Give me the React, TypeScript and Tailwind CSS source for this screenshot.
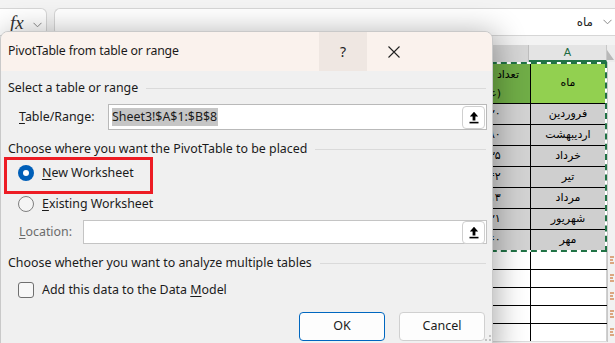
import React from "react";

const months = ["فروردین", "اردیبهشت", "خرداد", "تیر", "مرداد", "شهریور", "مهر"];
const counts = ["۱۲۰", "۹۸۰", "۷۳۵", "۶۴۲", "۸۱۳", "۵۲۱", "۴۶۰"];

function Chevron({ className = "" }: { className?: string }) {
  return (
    <svg width="9" height="6" viewBox="0 0 9 6" className={className}>
      <path d="M0.5 0.8 L4.5 4.8 L8.5 0.8" fill="none" stroke="#8a8a8a" strokeWidth="1" />
    </svg>
  );
}

function RefEditButton() {
  return (
    <div className="w-[23px] h-[23px] rounded-[4px] border border-[#cfcfcf] bg-white flex items-center justify-center shrink-0">
      <svg width="10" height="13" viewBox="0 0 10 13">
        <path d="M5 0.8 L9.2 5.4 H6.4 V9.4 H3.6 V5.4 H0.8 Z" fill="#000" />
        <rect x="0.5" y="10.8" width="9" height="1.6" fill="#000" />
      </svg>
    </div>
  );
}

function GroupTitle({ text }: { text: string }) {
  return (
    <div className="flex items-center gap-[8px] h-[16px] pr-[6px]">
      <span className="text-[12.4px] text-[#1b1b1b] whitespace-nowrap">{text}</span>
      <div className="flex-1 h-px bg-[#dadada]" />
    </div>
  );
}

function Sheet() {
  return (
    <div className="flex flex-col">
      {/* column headers */}
      <div className="flex h-[17px] mt-[9px]">
        <div className="flex-1 bg-[#d6d6d6] border-r border-[#bdbdbd]" />
        <div className="w-[78px] bg-[#e4e4e4] border-r border-[#c8c8c8] flex items-center justify-center text-[11px] text-[#1e6b41] font-['Liberation_Sans',sans-serif] border-b-2 border-b-[#217346]">
          A
        </div>
        <div className="w-[8px] bg-[#ececec] flex items-end justify-end">
          <svg width="8" height="14" viewBox="0 0 8 14">
            <path d="M0 2 L7 12 L0 12 Z" fill="#b8b8b8" />
          </svg>
        </div>
      </div>

      <div className="flex">
        <div className="flex-1 flex flex-col font-['DejaVu_Sans',sans-serif]">
          {/* copied range with marching ants */}
          <div className="border-2 border-dashed border-[#217346] bg-white flex flex-col" dir="rtl">
            <div className="flex h-[39px]">
              <div className="w-[75px] bg-[#92d050] border-l border-black flex items-center justify-center text-[11px] text-black">ماه</div>
              <div className="w-[57px] bg-[#70ad47] flex flex-col items-start justify-center text-[11px] leading-[19px] text-black whitespace-nowrap">
                <span className="pr-[11px]">تعداد فروش</span>
                <span className="pr-[29px]">(عدد)</span>
              </div>
              <div className="flex-1 bg-[#70ad47]" />
            </div>
            {months.map((m, i) => (
              <div key={m} className="flex h-[21px] border-t border-black">
                <div className="w-[75px] bg-[#cfcfcf] border-l border-black flex items-center justify-center text-[11px] text-black">{m}</div>
                <div className="w-[57px] bg-[#d2d2d2] flex items-center justify-start pl-[10px] text-[11px] text-black" dir="ltr">
                  {counts[i]}
                </div>
                <div className="flex-1 bg-[#d2d2d2]" />
              </div>
            ))}
          </div>
          {[0, 1, 2, 3, 4].map((r) => (
            <div key={r} className={`flex h-[18px] border-b ${r === 4 ? "border-[#dcdcdc]" : "border-black"}`} dir="rtl">
              <div className="w-[77px] bg-white border-l border-black border-r border-r-[#d0d0d0]" />
              <div className="flex-1 bg-white" />
            </div>
          ))}
        </div>
        <div className="w-[8px] bg-[#f2f2f2] border-l border-[#c8c8c8] flex flex-col">
          <div className="h-[189px]" />
          {[0, 1, 2, 3, 4].map((n) => (
            <div key={n} className="h-[18px] flex items-center pl-[1px]">
              <svg width="6" height="8" viewBox="0 0 6 8">
                <path d="M1 1 H5 M1 4 H4 M1 7 H5" stroke="#c55a11" strokeWidth="1" />
              </svg>
            </div>
          ))}
        </div>
      </div>
    </div>
  );
}

export default function App() {
  return (
    <div className="relative w-[615px] h-[343px] overflow-hidden bg-[#f3f3f3] font-['Noto_Sans',sans-serif]">
      {/* Formula bar */}
      <div className="flex gap-[7px] pt-[8px] h-[36px]">
        <div className="w-[47px] h-[28px] bg-white border border-l-0 border-[#d6d6d6] rounded-tr-[6px] rounded-br-[6px] flex items-start pt-[3px] pl-[10px] gap-[9px]">
          <span className="font-['Liberation_Serif',serif] italic text-[19px] leading-[22px] text-[#333]">fx</span>
          <Chevron className="mt-[10px]" />
        </div>
        <div className="flex-1 h-[28px] bg-white border border-r-0 border-[#d6d6d6] rounded-l-[6px] flex items-center justify-end gap-[10px] pr-[3px]">
          <span className="font-['DejaVu_Sans',sans-serif] text-[12px] text-[#222]" dir="rtl">ماه</span>
          <Chevron />
        </div>
      </div>

      <Sheet />

      {/* Dialog */}
      <div className="absolute left-0 top-[31px] w-[493px] h-[330px] rounded-t-[8px] border border-[#c9c9c9] bg-[#f0f0f0] shadow-[4px_2px_30px_rgba(0,0,0,0.32)] flex flex-col overflow-hidden">
        <div className="h-[39px] bg-[#faf2ed] flex items-center shrink-0">
          <span className="flex-1 pl-[7px] text-[12.3px] tracking-[-0.15px] text-[#1a1a1a]">PivotTable from table or range</span>
          <div className="w-[48px] h-full bg-[#efe7e2] flex items-center justify-center text-[14px] text-[#222]">?</div>
          <div className="w-[54px] h-full flex items-center justify-center">
            <svg width="12" height="12" viewBox="0 0 12 12">
              <path d="M0.5 0.5 L11.5 11.5 M11.5 0.5 L0.5 11.5" stroke="#222" strokeWidth="1.1" />
            </svg>
          </div>
          <div className="w-[71px]" />
        </div>

        <div className="flex flex-col pl-[7px] text-[12.4px] text-[#1b1b1b]">
          <div className="mt-[9px]">
            <GroupTitle text="Select a table or range" />
          </div>

          <div className="flex items-center mt-[8px] pl-[11px]">
            <span className="w-[89px]"><span className="underline underline-offset-2">T</span>able/Range:</span>
            <div className="w-[379px] h-[26px] bg-white border border-[#b9b9b9] flex items-center justify-between pl-[3px] pr-[1px]">
              <span className="bg-[#c6c6c6] text-[#1b1b1b] leading-[18px] pr-[1px]">Sheet3!$A$1:$B$8</span>
              <RefEditButton />
            </div>
          </div>

          <div className="mt-[11px]">
            <GroupTitle text="Choose where you want the PivotTable to be placed" />
          </div>

          <div className="flex items-center gap-[8px] h-[20px] mt-[6px] pl-[10px]">
            <div className="w-[16px] h-[16px] rounded-full bg-[#005fb8] flex items-center justify-center">
              <div className="w-[6px] h-[6px] rounded-full bg-white" />
            </div>
            <span><span className="underline underline-offset-2">N</span>ew Worksheet</span>
          </div>

          <div className="flex items-center gap-[8px] h-[20px] mt-[11px] pl-[10px]">
            <div className="w-[16px] h-[16px] rounded-full border border-[#7f7f7f] bg-[#f5f5f5]" />
            <span><span className="underline underline-offset-2">E</span>xisting Worksheet</span>
          </div>

          <div className="flex items-center mt-[6px] pl-[11px]">
            <span className="w-[64px] text-[#6b6b6b]"><span className="underline underline-offset-2">L</span>ocation:</span>
            <div className="w-[404px] h-[24px] bg-white border border-[#c4c4c4] flex items-center justify-end pr-[1px]">
              <RefEditButton />
            </div>
          </div>

          <div className="mt-[11px]">
            <GroupTitle text="Choose whether you want to analyze multiple tables" />
          </div>

          <div className="flex items-center gap-[8px] h-[20px] mt-[9px] pl-[10px]">
            <div className="w-[16px] h-[16px] rounded-[3px] border border-[#6f6f6f] bg-[#f7f7f7]" />
            <span>Add this data to the Data <span className="underline underline-offset-2">M</span>odel</span>
          </div>

          <div className="flex justify-end gap-[14px] mt-[12px] pr-[7px]">
            <button className="w-[86px] h-[29px] rounded-[4px] border border-[#0067c0] bg-[#fdfdfd] text-[12.5px] text-[#1b1b1b]">OK</button>
            <button className="w-[86px] h-[29px] rounded-[4px] border border-[#d0d0d0] bg-[#fdfdfd] text-[12.5px] text-[#1b1b1b]">Cancel</button>
          </div>
        </div>

        <svg className="absolute right-0 bottom-[18px]" width="8" height="8" viewBox="0 0 8 8">
          <rect x="5" y="1" width="2" height="2" fill="#c2c2c2" />
          <rect x="1" y="5" width="2" height="2" fill="#c2c2c2" />
          <rect x="5" y="5" width="2" height="2" fill="#c2c2c2" />
        </svg>
      </div>

      {/* annotation */}
      <div className="absolute left-[4px] top-[157px] w-[149px] h-[37px] border-[3px] border-[#ed1c24]" />
    </div>
  );
}
